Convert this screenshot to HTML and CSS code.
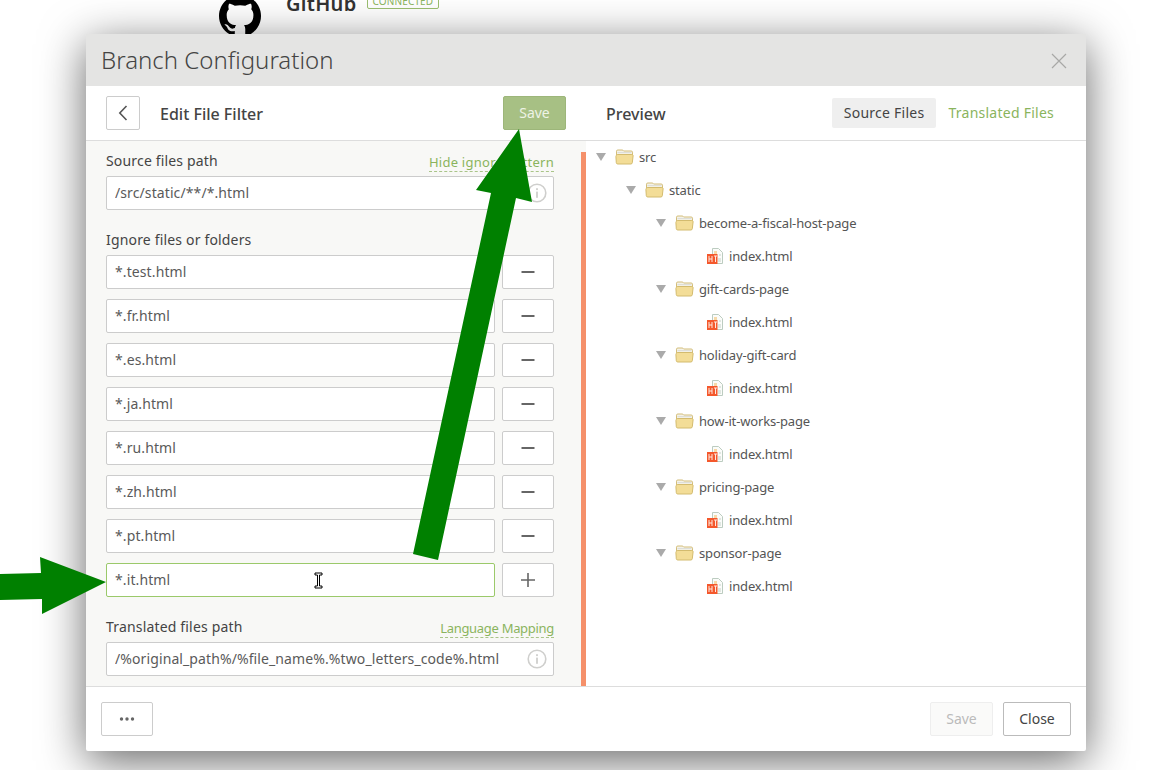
FILE: index.html
```html
<!DOCTYPE html>
<html lang="en">
<head>
    <meta charset="UTF-8">
    <meta name="viewport" content="width=device-width, initial-scale=1.0">
    <title>Branch Configuration</title>
    <link rel="stylesheet" href="styles.css">
</head>
<body>
    <svg class="defs" width="0" height="0">
        <symbol id="folder" viewBox="0 0 19 16">
            <path d="M1.5 4V2.2C1.5 1.4 2 1 2.8 1h4.4c.6 0 1 .3 1.3.8l.2.2h7.5c.8 0 1.3.5 1.3 1.2V6H1.5z" fill="#f4f2e8" stroke="#d3bd78"/>
            <path d="M2.5 3.6h14" stroke="#dcdcd6" fill="none"/>
            <path d="M1.3 6.5c.1-.7.6-1 1.3-1h14.2c.8 0 1.4.5 1.3 1.3l-.8 6.9c-.1.8-.6 1.3-1.4 1.3H2.7c-.8 0-1.3-.5-1.4-1.3L.9 7.5z" fill="#f3dd97" stroke="#d3bb6e"/>
        </symbol>
        <symbol id="html-file" viewBox="0 0 16 16">
            <path d="M5.5.5h6l4 4v11h-10z" fill="#fbfcfa" stroke="#bcccc0"/>
            <path d="M11 11h3M11 13h3M12 7h2" stroke="#c5d2c8"/>
            <path d="M7 3h3v3H7z" fill="#f7d9a8"/>
            <rect x="0" y="6" width="10.5" height="10" fill="#f4582c"/>
            <path d="M2 8v6M5 8v6M2 11h3M7 8h3M8.5 8v6" stroke="#fde9df" fill="none"/>
        </symbol>
        <symbol id="info" viewBox="0 0 20 20">
            <circle cx="10" cy="10" r="8.8" fill="none" stroke="#cfcfcd" stroke-width="1.6"/>
            <rect x="9.1" y="8.6" width="1.8" height="6.2" fill="#cfcfcd"/>
            <rect x="9.1" y="5.2" width="1.8" height="1.9" fill="#cfcfcd"/>
        </symbol>
        <symbol id="minus" viewBox="0 0 14 14">
            <path d="M.5 7h13" stroke="#666" stroke-width="2" fill="none"/>
        </symbol>
    </svg>

    <div class="backdrop">
        <svg class="github-mark" viewBox="0 0 16 16">
            <path fill-rule="evenodd" d="M8 0C3.58 0 0 3.58 0 8c0 3.54 2.29 6.53 5.47 7.59.4.07.55-.17.55-.38 0-.19-.01-.82-.01-1.49-2.01.37-2.53-.49-2.69-.94-.09-.23-.48-.94-.82-1.13-.28-.15-.68-.52-.01-.53.63-.01 1.08.58 1.23.82.72 1.21 1.87.87 2.33.66.07-.52.28-.87.51-1.07-1.78-.2-3.64-.89-3.64-3.95 0-.87.31-1.59.82-2.15-.08-.2-.36-1.02.08-2.12 0 0 .67-.21 2.2.82.64-.18 1.32-.27 2-.27.68 0 1.36.09 2 .27 1.53-1.04 2.2-.82 2.2-.82.44 1.1.16 1.92.08 2.12.51.56.82 1.28.82 2.15 0 3.07-1.87 3.75-3.65 3.95.29.25.54.73.54 1.48 0 1.07-.01 1.93-.01 2.2 0 .21.15.46.55.38A8.013 8.013 0 0016 8c0-4.42-3.58-8-8-8z"/>
        </svg>
        <div class="backdrop-text">
            <div class="integration-name">
                <span class="integration-title">GitHub</span>
                <span class="badge">CONNECTED</span>
            </div>
            <p class="integration-desc">Pull all of the source files and keep translated content up to date with the branches</p>
        </div>
    </div>

    <div class="modal">
        <div class="modal-header">
            <span class="modal-title">Branch Configuration</span>
            <svg class="close-icon" width="16" height="16" viewBox="0 0 16 16">
                <path d="M1 1l14 14M15 1L1 15" stroke="#a8a8a6" stroke-width="1.2" fill="none"/>
            </svg>
        </div>

        <div class="toolbar">
            <div class="toolbar-left">
                <button class="btn btn-icon back-btn">
                    <svg width="10" height="16" viewBox="0 0 10 16">
                        <path d="M8.5 1L1.8 8l6.7 7" stroke="#555" stroke-width="1.6" fill="none"/>
                    </svg>
                </button>
                <span class="toolbar-title">Edit File Filter</span>
                <button class="btn btn-text btn-save">Save</button>
            </div>
            <div class="toolbar-right">
                <span class="toolbar-title">Preview</span>
                <div class="tabs">
                    <span class="tab tab-active">Source Files</span>
                    <span class="tab">Translated Files</span>
                </div>
            </div>
        </div>

        <div class="modal-body">
            <div class="form-panel">
                <div class="form">
                    <div class="label-row">
                        <label>Source files path</label>
                        <a class="dashed-link link-wide">Hide ignore pattern</a>
                    </div>
                    <div class="field">
                        <input type="text" value="/src/static/**/*.html">
                        <svg class="info-icon"><use href="#info"/></svg>
                    </div>

                    <div class="label-row section-gap">
                        <label>Ignore files or folders</label>
                    </div>
                    <div class="ignore-list">
                        <div class="ignore-row">
                            <div class="field"><input type="text" value="*.test.html"></div>
                            <button class="btn btn-icon row-btn"><svg width="14" height="14"><use href="#minus"/></svg></button>
                        </div>
                        <div class="ignore-row">
                            <div class="field"><input type="text" value="*.fr.html"></div>
                            <button class="btn btn-icon row-btn"><svg width="14" height="14"><use href="#minus"/></svg></button>
                        </div>
                        <div class="ignore-row">
                            <div class="field"><input type="text" value="*.es.html"></div>
                            <button class="btn btn-icon row-btn"><svg width="14" height="14"><use href="#minus"/></svg></button>
                        </div>
                        <div class="ignore-row">
                            <div class="field"><input type="text" value="*.ja.html"></div>
                            <button class="btn btn-icon row-btn"><svg width="14" height="14"><use href="#minus"/></svg></button>
                        </div>
                        <div class="ignore-row">
                            <div class="field"><input type="text" value="*.ru.html"></div>
                            <button class="btn btn-icon row-btn"><svg width="14" height="14"><use href="#minus"/></svg></button>
                        </div>
                        <div class="ignore-row">
                            <div class="field"><input type="text" value="*.zh.html"></div>
                            <button class="btn btn-icon row-btn"><svg width="14" height="14"><use href="#minus"/></svg></button>
                        </div>
                        <div class="ignore-row">
                            <div class="field"><input type="text" value="*.pt.html"></div>
                            <button class="btn btn-icon row-btn"><svg width="14" height="14"><use href="#minus"/></svg></button>
                        </div>
                        <div class="ignore-row">
                            <div class="field field-focus">
                                <input type="text" value="*.it.html">
                                <svg class="text-cursor" width="9" height="17" viewBox="0 0 9 17">
                                    <path d="M1 1h7v2H5.5v11H8v2H1v-2h2.5V3H1z" fill="#fff" stroke="#000" stroke-width="1"/>
                                </svg>
                            </div>
                            <button class="btn btn-icon row-btn">
                                <svg width="14" height="14" viewBox="0 0 14 14"><path d="M0 7h14M7 0v14" stroke="#666" stroke-width="1.6" fill="none"/></svg>
                            </button>
                        </div>
                    </div>

                    <div class="label-row section-gap">
                        <label>Translated files path</label>
                        <a class="dashed-link link-narrow">Language Mapping</a>
                    </div>
                    <div class="field">
                        <input type="text" value="/%original_path%/%file_name%.%two_letters_code%.html">
                        <svg class="info-icon"><use href="#info"/></svg>
                    </div>
                </div>
                <div class="splitter"></div>
            </div>

            <div class="tree">
                <div class="tree-row depth-0"><i class="caret"></i><svg class="folder"><use href="#folder"/></svg>src</div>
                <div class="tree-row depth-1"><i class="caret"></i><svg class="folder"><use href="#folder"/></svg>static</div>
                <div class="tree-row depth-2"><i class="caret"></i><svg class="folder"><use href="#folder"/></svg>become-a-fiscal-host-page</div>
                <div class="tree-row file-row"><svg class="file"><use href="#html-file"/></svg>index.html</div>
                <div class="tree-row depth-2"><i class="caret"></i><svg class="folder"><use href="#folder"/></svg>gift-cards-page</div>
                <div class="tree-row file-row"><svg class="file"><use href="#html-file"/></svg>index.html</div>
                <div class="tree-row depth-2"><i class="caret"></i><svg class="folder"><use href="#folder"/></svg>holiday-gift-card</div>
                <div class="tree-row file-row"><svg class="file"><use href="#html-file"/></svg>index.html</div>
                <div class="tree-row depth-2"><i class="caret"></i><svg class="folder"><use href="#folder"/></svg>how-it-works-page</div>
                <div class="tree-row file-row"><svg class="file"><use href="#html-file"/></svg>index.html</div>
                <div class="tree-row depth-2"><i class="caret"></i><svg class="folder"><use href="#folder"/></svg>pricing-page</div>
                <div class="tree-row file-row"><svg class="file"><use href="#html-file"/></svg>index.html</div>
                <div class="tree-row depth-2"><i class="caret"></i><svg class="folder"><use href="#folder"/></svg>sponsor-page</div>
                <div class="tree-row file-row"><svg class="file"><use href="#html-file"/></svg>index.html</div>
            </div>
        </div>

        <div class="modal-footer">
            <button class="btn btn-more">
                <svg width="16" height="4" viewBox="0 0 16 4"><circle cx="2.5" cy="2" r="1.7" fill="#666"/><circle cx="8" cy="2" r="1.7" fill="#666"/><circle cx="13.5" cy="2" r="1.7" fill="#666"/></svg>
            </button>
            <div class="footer-actions">
                <button class="btn btn-text btn-disabled">Save</button>
                <button class="btn btn-text btn-close">Close</button>
            </div>
        </div>
    </div>

    <!-- green annotation arrows drawn on top of the screenshot -->
    <svg class="annotations" width="1153" height="770" viewBox="0 0 1153 770">
        <polygon fill="#008000" points="519,129 532,202 516,198 438,560 413,554 491,193 476,190"/>
        <polygon fill="#008000" points="106,582 40,557 41,573 0,574 0,600 42,599 42,614"/>
    </svg>
</body>
</html>
```

FILE: styles.css
```css
* {
    box-sizing: border-box;
}

html, body {
    height: 100%;
}

body {
    margin: 0;
    overflow: hidden;
    background: #fff;
    color: #444;
    font-family: "Noto Sans", sans-serif;
    font-size: 14px;
}

.defs {
    display: block;
    height: 0;
}

/* page behind the modal, only a strip of it shows */
.backdrop {
    height: 34px;
    overflow: hidden;
    display: flex;
    align-items: flex-start;
    padding-left: 219px;
}

.github-mark {
    flex: none;
    width: 42px;
    height: 42px;
    margin: -5px 25px 0 0;
}

.backdrop-text {
    flex: none;
    margin-top: -10px;
}

.integration-name {
    display: flex;
    align-items: flex-start;
    gap: 10px;
}

.integration-title {
    font-size: 20px;
    font-weight: 600;
    line-height: 27px;
    letter-spacing: 0.3px;
    color: #333;
}

.badge {
    margin-top: 4px;
    height: 15px;
    padding: 0 5px;
    border: 1px solid #9bbf70;
    border-radius: 2px;
    font-size: 10px;
    line-height: 13px;
    letter-spacing: 0.15px;
    color: #8ab45d;
}

.integration-desc {
    margin: 14px 0 0;
    font-size: 14px;
    line-height: 20px;
    white-space: nowrap;
}

.modal {
    position: relative;
    width: 1000px;
    height: 717px;
    margin-left: 86px;
    display: flex;
    flex-direction: column;
    background: #fff;
    border-radius: 2px;
    box-shadow: 0 10px 45px rgba(0, 0, 0, 0.6);
}

.modal-header {
    flex: none;
    height: 52px;
    padding: 0 19px 0 15px;
    display: flex;
    align-items: center;
    justify-content: space-between;
    background: #e4e4e3;
}

.modal-title {
    margin-bottom: 2px;
    font-size: 24px;
    font-weight: 300;
    color: #444;
}

.close-icon {
    margin-top: 2px;
}

.toolbar {
    flex: none;
    height: 55px;
    display: flex;
    border-bottom: 1px solid #ddd;
}

.toolbar-left {
    width: 500px;
    padding: 0 20px;
    display: flex;
    align-items: center;
}

.toolbar-right {
    flex: 1;
    padding: 0 20px;
    display: flex;
    align-items: center;
    justify-content: space-between;
}

.toolbar-title {
    padding-top: 2px;
    font-size: 16px;
    font-weight: 500;
    color: #444;
}

.back-btn {
    margin-right: 20px;
    width: 34px;
}

.btn {
    height: 34px;
    padding: 0;
    display: flex;
    align-items: center;
    justify-content: center;
    background: #fff;
    border: 1px solid #ccc;
    border-radius: 2px;
    color: #444;
    font-family: inherit;
    font-size: 14px;
}

.btn-text {
    padding-bottom: 2px;
}

.btn-save {
    width: 63px;
    margin-left: auto;
    background: #a7c084;
    border-color: #9db67a;
    color: #eef3e6;
}

.tabs {
    display: flex;
}

.tab {
    height: 30px;
    padding: 0 12px;
    line-height: 29px;
    letter-spacing: 0.25px;
    border-radius: 2px;
    color: #8ab45d;
}

.tab-active {
    background: #efefef;
    color: #444;
}

.modal-body {
    flex: 1;
    min-height: 0;
    display: flex;
}

.form-panel {
    width: 500px;
    display: flex;
    background: #f8f8f6;
}

.form {
    flex: 1;
    padding: 8px 27px 10px 20px;
}

.label-row {
    height: 24px;
    margin-bottom: 3px;
    padding-bottom: 2px;
    display: flex;
    align-items: center;
    justify-content: space-between;
    letter-spacing: 0.17px;
}

.section-gap {
    margin-top: 18px;
}

.dashed-link {
    margin-top: 6px;
    font-size: 13px;
    line-height: 17px;
    color: #8ab45d;
    border-bottom: 1px dashed #a9c488;
}

.link-wide {
    letter-spacing: 0.26px;
}

.link-narrow {
    letter-spacing: -0.3px;
}

.field {
    position: relative;
    flex: 1;
    height: 34px;
    display: flex;
    align-items: center;
    background: #fff;
    border: 1px solid #ccc;
    border-radius: 2px;
}

.field-focus {
    border-color: #9bc96a;
}

.field input {
    flex: 1;
    min-width: 0;
    height: 100%;
    padding: 0 8px 2px;
    border: none;
    outline: none;
    background: transparent;
    color: #5a5a5a;
    font-family: inherit;
    font-size: 14px;
    letter-spacing: 0.1px;
}

.info-icon {
    flex: none;
    width: 20px;
    height: 20px;
    margin-right: 6px;
}

.text-cursor {
    position: absolute;
    left: 207px;
    top: 8px;
}

.ignore-list {
    display: flex;
    flex-direction: column;
    gap: 10px;
}

.ignore-row {
    display: flex;
    gap: 7px;
}

.row-btn {
    flex: none;
    width: 52px;
}

.splitter {
    flex: none;
    width: 5px;
    margin-top: 11px;
    background: #f5906a;
}

.tree {
    flex: 1;
    margin-top: -1px;
    color: #555;
    font-size: 13px;
    letter-spacing: -0.16px;
}

.tree-row {
    height: 33px;
    display: flex;
    align-items: center;
}

.depth-0 {
    padding-left: 10px;
}

.depth-1 {
    padding-left: 40px;
}

.depth-2 {
    padding-left: 70px;
}

.file-row {
    padding-left: 121px;
}

.caret {
    flex: none;
    width: 0;
    height: 0;
    margin-right: 9px;
    border-style: solid;
    border-width: 8px 5.5px 0;
    border-color: #aaa transparent transparent;
}

.folder {
    flex: none;
    width: 19px;
    height: 16px;
    margin-right: 5px;
}

.file {
    flex: none;
    width: 16px;
    height: 16px;
    margin-right: 6px;
}

.modal-footer {
    flex: none;
    height: 65px;
    padding: 15px;
    display: flex;
    justify-content: space-between;
    border-top: 1px solid #ddd;
}

.btn-more {
    width: 52px;
}

.footer-actions {
    display: flex;
    gap: 10px;
}

.btn-disabled {
    width: 63px;
    background: #fafaf9;
    border-color: #eee;
    color: #bbb;
}

.btn-close {
    width: 68px;
    border-color: #bbb;
}

.annotations {
    position: absolute;
    left: 0;
    top: 0;
    pointer-events: none;
}
```
